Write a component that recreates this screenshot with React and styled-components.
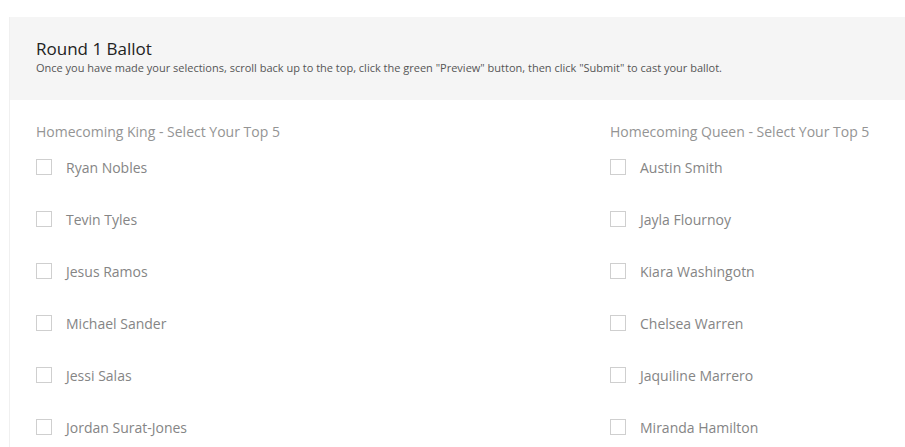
import React from "react";
import styled, { createGlobalStyle } from "styled-components";

const Global = createGlobalStyle`
  html, body { margin: 0; padding: 0; background: #fff; overflow: hidden; }
  body { font-family: "Open Sans", "Noto Sans", sans-serif; }
`;

const Card = styled.div`
  margin: 17px 0 0 9px;
  border-left: 1px solid #f0f0f0;
  background: #fff;
`;

const Header = styled.div`
  background: #f5f5f5;
  height: 83px;
  box-sizing: border-box;
  padding: 20px 26px 0;
`;

const Title = styled.h2`
  margin: 0;
  font-size: 17px;
  font-weight: 400;
  line-height: 23px;
  color: #222;
`;

const Sub = styled.p`
  margin: 1px 0 0;
  font-size: 11px;
  line-height: 14px;
  color: #555;
  white-space: nowrap;
`;

const Body = styled.div`
  display: grid;
  grid-template-columns: 574px 1fr;
  padding: 22px 26px 0;
`;

const Column = styled.div`
  display: flex;
  flex-direction: column;
`;

const GroupLabel = styled.div`
  font-size: 14px;
  line-height: 19px;
  color: #949494;
  margin-bottom: 18px;
`;

const Option = styled.label`
  display: flex;
  align-items: center;
  gap: 14px;
  height: 16px;
  margin-bottom: 36px;
  font-size: 14px;
  color: #858585;
`;

const Box = styled.span`
  width: 16px;
  height: 16px;
  box-sizing: border-box;
  border: 1px solid #cfcfcf;
  background: #fff;
  flex: none;
`;

const king = ["Ryan Nobles", "Tevin Tyles", "Jesus Ramos", "Michael Sander", "Jessi Salas", "Jordan Surat-Jones"];
const queen = ["Austin Smith", "Jayla Flournoy", "Kiara Washingotn", "Chelsea Warren", "Jaquiline Marrero", "Miranda Hamilton"];

const Group = ({ label, names }) => (
  <Column>
    <GroupLabel>{label}</GroupLabel>
    {names.map((n) => (
      <Option key={n}>
        <Box />
        {n}
      </Option>
    ))}
  </Column>
);

export default function App() {
  return (
    <>
      <Global />
      <Card>
        <Header>
          <Title>Round 1 Ballot</Title>
          <Sub>
            Once you have made your selections, scroll back up to the top, click the green "Preview" button, then click "Submit" to cast your ballot.
          </Sub>
        </Header>
        <Body>
          <Group label="Homecoming King - Select Your Top 5" names={king} />
          <Group label="Homecoming Queen - Select Your Top 5" names={queen} />
        </Body>
      </Card>
    </>
  );
}
